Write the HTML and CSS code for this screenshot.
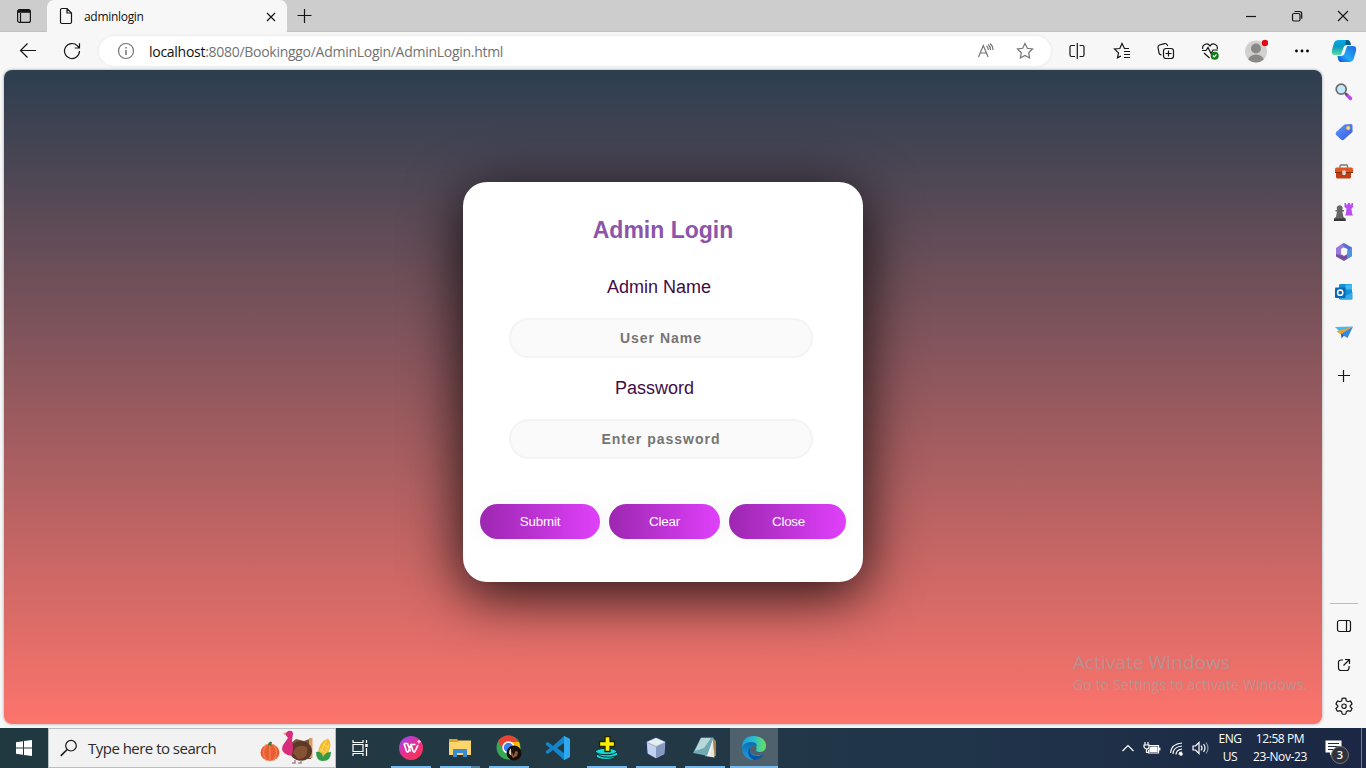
FILE: index.html
```html
<!DOCTYPE html>
<html lang="en">
<head>
<meta charset="utf-8">
<title>adminlogin</title>
<link rel="stylesheet" href="styles.css">
</head>
<body>
<header class="tabstrip">
  <div class="tab-actions"><svg width="16" height="16" viewBox="0 0 16 16" class="line"><rect x="1.6" y="1.600" width="12.800" height="12.800" rx="2"/><path d="M4.500 5v9" /><path d="M2 3.300h12" stroke-width="3"/></svg></div>
  <div class="tab">
    <svg width="14" height="18" viewBox="0 0 14 18" class="line"><path d="M1.500 3Q1.500 1.500 3 1.500H8L12.500 6V15Q12.500 16.500 11 16.500H3Q1.500 16.500 1.500 15ZM8 1.500V6H12.500"/></svg>
    <span class="tab-title">adminlogin</span>
    <svg class="line tab-close" width="10" height="10" viewBox="0 0 10 10"><path d="M1 1l8 8M9 1L1 9"/></svg>
  </div>
  <svg class="line new-tab" width="16" height="16" viewBox="0 0 16 16"><path d="M7.500 1v14M.5 7.500h14"/></svg>
  <div class="window-controls">
    <span><svg class="line" width="12" height="12" viewBox="0 0 12 12"><path d="M1 6.500h10"/></svg></span>
    <span><svg class="line" width="12" height="12" viewBox="0 0 12 12"><rect x="1.500" y="3.500" width="7.500" height="7.500" rx="1.500"/><path d="M3.500 1.500H8.500Q10.700 1.500 10.700 3.700V8.700"/></svg></span>
    <span><svg class="line" width="12" height="12" viewBox="0 0 12 12"><path d="M1 1l10 10M11 1L1 11"/></svg></span>
  </div>
</header>

<nav class="toolbar">
  <div class="nav-buttons">
    <span><svg class="line" width="18" height="18" viewBox="0 0 18 18"><path d="M17 8.500H2M8.500 1.500l-7 7 7 7"/></svg></span>
    <span><svg class="line" width="18" height="18" viewBox="0 0 18 18"><path d="M16.500 9A7.500 7.500 0 1 1 14.300 3.700L16.500 6M16.500 1.300V6H11.800"/></svg></span>
  </div>
  <div class="address">
    <svg class="line grey" width="18" height="18" viewBox="0 0 18 18"><circle cx="9" cy="9" r="7.500"/><path d="M9 8v5M9 5v1.500" stroke-width="1.500"/></svg>
    <div class="url"><b>localhost</b>:8080/Bookinggo/AdminLogin/AdminLogin.html</div>
    <svg class="line grey read" width="18" height="18" viewBox="0 0 18 18"><path d="M1.500 15L6.300 3.500 11.100 15M3 11h6.500M9.500 4Q11.200 5.500 11.300 8M11 2.500Q13.500 4.500 13.600 8M13 1.500Q16 4 16 8"/></svg>
    <svg class="line grey" width="18" height="18" viewBox="0 0 18 18"><path d="M9 1.500l2.300 4.800 5.200.7-3.800 3.700.9 5.300L9 13.500 4.400 16l.9-5.300L1.500 7l5.200-.7Z"/></svg>
  </div>
  <div class="tools">
    <span><svg class="line" width="18" height="18" viewBox="0 0 18 18"><path d="M7 3.500H3.500Q2 3.500 2 5V13Q2 14.500 3.500 14.500H7M11.500 3.500h3q1.500 0 1.500 1.500v8q0 1.500-1.500 1.500h-3M9.300 1v16"/></svg></span>
    <span><svg class="line" width="18" height="18" viewBox="0 0 18 18"><path d="M16 6.500H11.500L9 1.500 6.800 6.500 1.500 7l4 3.900-1 5L8 14M11 9.500h6M11 12.500h6M11 15.500h6"/></svg></span>
    <span><svg class="line" width="18" height="18" viewBox="0 0 18 18"><rect x="6.500" y="6.500" width="10" height="10" rx="2.500"/><path d="M11.500 8.500v6M8.500 11.500h6M4.500 13L3.500 12.600Q2.300 12.300 2 11L1 5.500Q.8 3.700 2.500 3L7.500 1.600Q9 1.200 10 2.500L10.700 4"/></svg></span>
    <span><svg class="line heart" width="18" height="18" viewBox="0 0 18 18"><path d="M1.700 7C1 2.500 6.500 0 9 4 11.500 0 17 2.500 16.300 7M1 8.500h4L7 5.500l3 6 2-3.500h5M3 11l5.500 5"/><circle cx="13.700" cy="13.700" r="4" fill="#107c10" stroke="none"/><path d="M12 13.500l1.300 1.300 2.200-2.500" stroke="#fff"/></svg></span>
    <span><svg width="24" height="24" viewBox="0 0 24 24"><defs><clipPath id="face"><circle cx="12" cy="12.500" r="11"/></clipPath></defs><g clip-path="url(#face)"><rect width="24" height="24" fill="#d2d0ce"/><circle cx="12" cy="9.500" r="5" fill="#8a8886"/><ellipse cx="12" cy="21.500" rx="8" ry="6" fill="#8a8886"/></g><circle cx="21" cy="4" r="3.200" fill="#e30613"/></svg></span>
    <span class="more"><svg width="16" height="4"><circle cx="2.500" cy="2" r="1.400"/><circle cx="8" cy="2" r="1.400"/><circle cx="13.500" cy="2" r="1.400"/></svg></span>
    <span class="copilot"><svg width="26" height="26" viewBox="0 0 26 26"><defs><linearGradient id="ca" x2="0" y2="1"><stop stop-color="#08a8e2"/><stop offset=".45" stop-color="#0e9ac4"/><stop offset="1" stop-color="#5bdc9b"/></linearGradient><linearGradient id="cb" x1="1" x2="0" y2="1"><stop stop-color="#2368dc"/><stop offset=".6" stop-color="#20a9f7"/><stop offset="1" stop-color="#1745db"/></linearGradient></defs><path d="M8 2H16Q19 2 20 7H16Q13 7 12 11L10 17H4Q0 17 1 12L3 5Q4 2 8 2Z" fill="url(#ca)"/><path d="M15 2h1q3 0 4 5h-6z" fill="#095c86"/><path d="M18 24H10Q7 24 6.500 18H10Q13 18 14 14L16 8H22Q26 8 25 13L23 20Q22 24 18 24Z" fill="url(#cb)"/></svg></span>
  </div>
</nav>

<div class="workspace">
  <main class="page">
    <form class="card">
      <h1>Admin Login</h1>
      <label class="name-label">Admin Name</label>
      <input type="text" placeholder="User Name">
      <label class="pass-label">Password</label>
      <input type="password" placeholder="Enter password">
      <div class="buttons">
        <button type="button" class="submit">Submit</button><button type="button" class="clear">Clear</button><button type="button" class="close">Close</button>
      </div>
    </form>
    <div class="watermark"><div class="wm-big">Activate Windows</div><div class="wm-small">Go to Settings to activate Windows.</div></div>
  </main>
  <aside class="sidebar">
    <svg width="18" height="18" viewBox="0 0 18 18"><path d="M11.500 11.500l4 4" stroke="#b749f2" stroke-width="3.400" stroke-linecap="round"/><path d="M10 10l2 2" stroke="#555" stroke-width="2"/><circle cx="6.200" cy="6.200" r="5" fill="#c5e7fc" stroke="#6b6b6b" stroke-width="1.700"/></svg>
    <svg width="18" height="18" viewBox="0 0 18 18"><defs><linearGradient id="tg" y2="1"><stop stop-color="#53a0ff"/><stop offset="1" stop-color="#4253df"/></linearGradient></defs><path d="M9.500 1.500L16 1Q17.500 1 17.500 2.500V9L9 16.500Q7.500 17.800 6 16.500L1.200 12Q0 10.500 1.200 9Z" fill="url(#tg)"/><circle cx="13.200" cy="5" r="1.500" fill="#fff" stroke="#f6bd32" stroke-width="1.300"/></svg>
    <svg width="20" height="18" viewBox="0 0 20 18"><path d="M6 5V3.300q0-1.300 1-1.300h5.500q1 0 1 1.300V5" fill="none" stroke="#777" stroke-width="1.300"/><path d="M2 8h15v6q0 1.500-1.500 1.500h-12Q2 15.500 2 14Z" fill="#bd3f12"/><path d="M1 6q0-1.500 1.500-1.500h15q1.500 0 1.500 1.500v3.500H1Z" fill="#df571e"/><path d="M1 9.500h18" stroke="#8b2b10"/><rect x="8.300" y="7.500" width="3.400" height="4.500" rx="1" fill="#ddd"/></svg>
    <svg class="games" width="20" height="20" viewBox="0 0 20 20"><path d="M10.500 1H12v1.500h2V1h2v1.500h1.500V1H19v4l-1.500 1.500.5 5 1 2h-8l1-2 .5-5L10.500 5Z" fill="#bc4cf4"/><path d="M3.200 8a3 3 0 1 1 5 0H10v1.500H8.300L9.500 15l2 1.500V19H0v-2.500L2 15l1-5.500H1.500V8Z" fill="#666"/><path d="M0 16.500h11.500V19H0Z" fill="#383838"/></svg>
    <svg width="18" height="18" viewBox="0 0 18 18"><path d="M6 1.500L9 0l8 4.500v6L12.500 8V6L9 4.500Z" fill="#5271d6"/><path d="M1 5L6 1.500 10 3.500 6 6v5l3 2-4 2.500L1 13Z" fill="#9a7bdb"/><path d="M1 11l4 1 4 1 3.500-2V8L17 10.500V13L9 18 1 13.500Z" fill="#75509f"/><path d="M12.500 8L17 5v8l-5 3v-4.500Z" fill="#4d94e0"/></svg>
    <svg width="18" height="18" viewBox="0 0 18 18"><rect x="4" y="1" width="13" height="15.500" rx="1" fill="#168ed8"/><path d="M10.500 1.500H17v5h-6.500Z" fill="#39bdf3"/><path d="M5 9l6.500 3.500 6-3.500v7.500H5Z" fill="#36a9e6"/><rect y="4.500" width="10.500" height="10.500" rx="1" fill="#0967b7"/><circle cx="5.200" cy="9.700" r="2.600" fill="none" stroke="#fff" stroke-width="1.500"/></svg>
    <svg width="18" height="18" viewBox="0 0 18 18"><path d="M0 4L18 3.500 6 10Z" fill="#45b9f0"/><path d="M1.500 8.500L18 3.500 6 11.500Z" fill="#f2a31d"/><path d="M6 11L18 3.500 12.500 15Z" fill="#3288e4"/><path d="M6 10.500l3 2-2.500 3Z" fill="#1c5cb4"/></svg>
    <svg class="line side-plus" width="12" height="12" viewBox="0 0 12 12"><path d="M5.500 0v12M0 5.500h12"/></svg>
    <div class="side-bottom">
      <svg class="line" width="16" height="14" viewBox="0 0 16 14"><rect x="1.500" y="1.500" width="13" height="11" rx="2"/><path d="M10.500 1.500v11"/></svg>
      <svg class="line" width="14" height="14" viewBox="0 0 14 14"><path d="M6 2H4Q1.500 2 1.500 4.500V10Q1.500 12.500 4 12.500H9.500Q12 12.500 12 10V8M8 1.500h4.500V6M12.500 1.500L6.500 7.500"/></svg>
      <svg class="line" width="18" height="18" viewBox="0 0 18 18"><path d="M7.200 1.300Q9 .8 10.800 1.300L11.300 3.800 13 4.700 15.300 4Q16.600 5.300 17 7L15.200 8.800V9.800L17 11.500Q16.500 13.200 15.300 14.400L13 13.700 11.300 14.600 10.800 17Q9 17.500 7.200 17L6.700 14.600 5 13.700 2.700 14.400Q1.500 13.200 1 11.500L2.800 9.800V8.800L1 7Q1.400 5.300 2.700 4L5 4.700 6.700 3.800Z"/><circle cx="9" cy="9.200" r="2.200"/></svg>
    </div>
  </aside>
</div>

<footer class="taskbar">
  <div class="start"><svg width="16" height="16" viewBox="0 0 16 16" fill="#fff"><path d="M0 2.300L7 1.200V7.500H0ZM8 1L16 0V7.500H8ZM0 8.500H7V14.800L0 13.700ZM8 8.500H16V16L8 15Z"/></svg></div>
  <div class="search">
    <svg class="line" width="18" height="18" viewBox="0 0 18 18"><circle cx="11" cy="6.700" r="5.300"/><path d="M7.200 10.500L.8 16.900" stroke-width="1.500"/></svg>
    <span class="search-text">Type here to search</span>
    <svg width="74" height="36" viewBox="0 0 74 36"><ellipse cx="12" cy="22.500" rx="9.500" ry="8.500" fill="#e95d34"/><path d="M8.500 14.500q-6 8 0 16M15.500 14.500q6 8 0 16M12 14v17" fill="none" stroke="#f58250" stroke-width="1.300"/><path d="M10 15q0-3 3-3.500l1 1-1 3.500Z" fill="#47772d"/>
      <path d="M32 14L38 9 46 11 53 8.500 53 29H42Z" fill="#795335"/><path d="M51 8h3.500v20H51Z" fill="#dc9a68"/><ellipse cx="43" cy="21" rx="11" ry="10" fill="#5b3828"/><path d="M35 23Q38 13 49 17 51 29 40 29Z" fill="#855236"/><path d="M30 1q5-1.500 5 3l-1 6 1 8-1 8Q21 24 25 15L30 8l-3-4Z" fill="#d92c7c"/><path d="M27.500 2L25 4l3 1Z" fill="#ec9b41"/><path d="M37 30v3h-3M43 30v3h-3" fill="none" stroke="#aa8790" stroke-width="1.500"/>
      <path d="M60 28Q59 12 70 8.500 75 13 70 23L65 31Z" fill="#f4bb31"/><path d="M62 24l6-13M66 26l5-12M62 19l6 4M65 14l6 4" stroke="#ffdb65"/><path d="M58 22Q64 21 65 27 67 22 73 22 73 31 65 31 58 31 58 22Z" fill="#36994a"/></svg>
  </div>
  <div class="taskview"><svg width="18" height="18" viewBox="0 0 18 18" fill="none" stroke="#fff" stroke-width="1.200"><path d="M2 1v2.500h10V1M2 17v-2.500h10V17M2 5.500h10v7H2ZM15.500 1v3M15.500 9v8"/><path d="M15.500 5v3" stroke-width="2.500"/></svg></div>
  <div class="apps">
    <span class="app on"><svg width="24" height="24" viewBox="0 0 24 24"><defs><linearGradient id="wp" x2=".8" y2="1"><stop stop-color="#8d4cff"/><stop offset=".5" stop-color="#e52f96"/><stop offset="1" stop-color="#fb334c"/></linearGradient></defs><circle cx="12" cy="12" r="12" fill="url(#wp)"/><path d="M5 7.500H8.500L11.500 15.500M5 7.500L7.500 15Q8.500 17.500 9.700 15L12 8.500 14 15Q15.200 17.500 16.200 15L19 9M12 8.500h4.500" fill="none" stroke="#fff" stroke-width="1.700" stroke-linejoin="round"/><path d="M20 4v3.500M18.200 5.700h3.600" stroke="#fff"/></svg></span>
    <span class="app on folder"><svg width="24" height="24" viewBox="0 0 24 24"><path d="M1 3h8l2 2v6H1Z" fill="#e4a225"/><path d="M1 6h9l1-1.500h12V19H1Z" fill="#fbd46c"/><path d="M5 21v-7q0-1 1-1h12q1 0 1 1v7h-4v-4H9v4Z" fill="#3a8bd0"/></svg></span>
    <span class="app on"><svg width="26" height="26" viewBox="0 0 26 26"><circle cx="12.500" cy="12.500" r="12" fill="#34a853"/><path d="M2 6Q6 .5 12.500.5T23 7H12.500L7.500 15.500Z" fill="#ea4335"/><path d="M12.500 7H23Q27 18 18 23L12.500 24.500 17 15Z" fill="#fbbc04"/><circle cx="12.500" cy="12.500" r="5.500" fill="#3c7ff0" stroke="#fff" stroke-width="1.500"/><circle cx="18" cy="18" r="7.500" fill="#150e0c"/><path d="M13 18.500q0-4 2-5v7Z" fill="#ddd0c6"/><path d="M16 14q5-2 6 3l-1 4-4 2-2-3Z" fill="#8d5b40"/><path d="M15.500 16q1-4 5-3l2 4-3-1-2 5Z" fill="#20120d"/></svg></span>
    <span class="app"><svg width="24" height="24" viewBox="0 0 24 24"><path d="M18 0L24 3V21L18 24 7 14 2 18 0 17V15L4 12 0 9V7L2 6 7 10ZM18 7L11 12 18 17Z" fill="#1585ca" fill-rule="evenodd"/><path d="M18 0l6 3v18l-6 3Z" fill="#2fa8ed"/></svg></span>
    <span class="app on"><svg width="24" height="24" viewBox="0 0 24 24"><ellipse cx="11" cy="20" rx="10" ry="3.500" fill="#16dada" stroke="#062d32"/><ellipse cx="13" cy="18" rx="10" ry="3.200" fill="#16dada" stroke="#062d32"/><ellipse cx="11" cy="15.500" rx="10.500" ry="3.200" fill="#16dada" stroke="#062d32"/><path d="M10 .5h5v5h4.500v5H15v5h-5v-5H4.500v-5H10Z" fill="#fff000" stroke="#222400" stroke-width="1.300"/></svg></span>
    <span class="app on"><svg width="24" height="24" viewBox="0 0 24 24"><path d="M2 5.500L12 1l10 4.500-1 13L12 23 3 18Z" fill="#9bb0ce" stroke="#29345c" stroke-width="1.300"/><path d="M3 6l9-4 9 4-9 4Z" fill="#e3eeee"/><path d="M3 7l9 4v11l-8-4.500Z" fill="#c3d3ef"/><path d="M12 11l9-4-1 10.500L12 22Z" fill="#8499bd"/></svg></span>
    <span class="app on"><svg width="26" height="24" viewBox="0 0 26 24"><path d="M21 2l3 3v15h-2Z" fill="#a88148"/><path d="M21 3l1.500 18.500L13 20Z" fill="#e5e7df"/><path d="M9 1.500h12.500L16 20 1 17Z" fill="#6faab4"/><path d="M9 2h10L12 12 3 15Z" fill="#b6d8d9"/><path d="M21.500 2L18 20h-3Z" fill="#f1f3ed"/><path d="M9 1h13" stroke="#384b53" stroke-dasharray="1 1"/></svg></span>
    <span class="app on active"><svg width="24" height="24" viewBox="0 0 24 24"><defs><linearGradient id="ea" x2="1"><stop stop-color="#169fe0"/><stop offset=".5" stop-color="#2dbed2"/><stop offset="1" stop-color="#69e353"/></linearGradient><linearGradient id="eb" x2="0" y2="1"><stop stop-color="#0b6fae"/><stop offset="1" stop-color="#229ee6"/></linearGradient></defs><path d="M0 12Q0 0 12 0 23 1 24 9 24 16 18 16 13 16 14.500 13 15 8 9 7 2 7 0 12Z" fill="url(#ea)"/><path d="M0 12Q2 6 9 6 15 6 15 10 9 8 8 13 8 22 22 18 17 24 11 24 0 22 0 12Z" fill="url(#eb)"/><path d="M8 11Q6 21 17 20L22 18Q18 24 12 24 3 20 8 11Z" fill="#0a559b"/></svg></span>
  </div>
  <div class="tray">
    <svg width="14" height="14" viewBox="0 0 14 14"><path d="M1.500 10L7 4.500l5.500 5.500"/></svg>
    <svg width="18" height="16" viewBox="0 0 18 16"><path d="M6 5.500h9.500v7.500H5.500V10M16.800 7.500v3"/><path d="M8 7h6v4.500H7V9Z" fill="#fff"/><path d="M2 2v3M5 2v3M1 5h5v2q0 2-2 2T1 7ZM3.500 9v3.500h2"/></svg>
    <svg width="15" height="16" viewBox="0 0 15 16"><path d="M1.500 13Q2 4 13 3M4 14Q4 7 13 6M7 14.500Q7 10 13 9M10 14.500Q10 12 13 12" stroke-width="1.100"/><circle cx="12" cy="14" r="1.200" fill="#fff"/></svg>
    <svg width="18" height="16" viewBox="0 0 18 16"><path d="M1 6h2.500L7 2.500v11L3.500 10H1ZM9 5.500q2 2.500 0 5M11.500 4q3 4 0 8"/><path d="M14 2.500q4 5.500 0 11" stroke="#8594a5"/></svg>
    <div class="lang"><span>ENG</span><span>US</span></div>
    <div class="clock"><span class="time">12:58 PM</span><span class="date">23-Nov-23</span></div>
    <div class="notice"><svg width="18" height="16" viewBox="0 0 18 16"><path d="M.5.5h16v12H8l-3 3v-3H.5Z" fill="#fff" stroke="none"/><path d="M3 3.500h11M3 6.500h11M3 9.500h6" stroke="#1b2a44"/></svg><b>3</b></div>
  </div>
</footer>
</body>
</html>
```

FILE: styles.css
```css
* { box-sizing: border-box; }
html, body { height: 100%; }
body {
  margin: 0;
  width: 1366px;
  height: 768px;
  overflow: hidden;
  display: grid;
  grid-template-rows: 32px 38px 658px 40px;
  background: #f7f7f7;
  font-family: "Open Sans", "Noto Sans", sans-serif;
  color: #111;
}
svg { display: block; flex: none; }
.line { fill: none; stroke: #161616; stroke-width: 1.2; }
.grey { stroke: #737373; }

.tabstrip { display: flex; align-items: center; background: #cdcdcd; border-bottom: 1px solid #c1c1c1; }
.tab-actions { width: 47px; padding-left: 16px; }
.tab {
  width: 240px; height: 32px; align-self: flex-start;
  display: flex; align-items: center; padding: 0 11px 0 12px;
  background: #f7f7f7; border-radius: 7px 7px 0 0;
}
.tab-title { flex: 1; padding-left: 11px; font-size: 12px; letter-spacing: -0.3px; }
.tab-close { margin-top: 1px; }
.new-tab { margin-left: 10px; }
.window-controls { margin-left: auto; display: flex; }
.window-controls span { width: 46px; display: flex; justify-content: center; }

.toolbar { display: flex; align-items: center; }
.nav-buttons { width: 99px; padding-left: 6px; display: flex; }
.nav-buttons span { width: 44px; display: flex; justify-content: center; }
.address {
  width: 952px; height: 30px; padding: 0 17px 0 18px;
  display: flex; align-items: center;
  background: #fff; border-radius: 15px; box-shadow: 0 0 3px #e2e2e2;
}
.url { flex: 1; padding-left: 14px; font-size: 14px; letter-spacing: -0.28px; color: #727272; }
.url b { font-weight: 400; color: #111; }
.read { margin-right: 21px; }
.tools { display: flex; align-items: center; padding-left: 4px; }
.tools span { width: 44.6px; display: flex; justify-content: center; }
.tools .more { padding-left: 4px; }
.tools .copilot { width: 42px; }
.heart { margin-right: 2px; }

.workspace { display: grid; grid-template-columns: 1318px 1fr; padding-left: 4px; }
.page {
  position: relative; height: 654px;
  border-radius: 8px; overflow: hidden;
  background: linear-gradient(#2c3e50, #fd746c);
  box-shadow: 0 0 3px #999;
  font-family: "Liberation Sans", Arial, sans-serif;
}
.card {
  width: 400px; height: 400px; margin: 112px auto 0; padding-top: 36px;
  display: flex; flex-direction: column; align-items: center;
  border-radius: 24px; background: #fff;
  box-shadow: 0 12px 55px 2px rgba(0, 0, 0, 0.8);
}
.card h1 { margin: 0; font-size: 23px; line-height: 24px; color: #8c55aa; }
.card label { font-size: 18px; line-height: 20px; color: #400c47; }
.card .name-label { margin: 35px 8px 21px 0; }
.card .pass-label { margin: 20px 17px 21px 0; }
.card input {
  width: 304px; height: 40px; margin: 0 4px 0 0; padding: 0 20px;
  border: 2px solid #f4f4f4; border-radius: 20px; background: #fafafa;
  font: 700 14px "Liberation Sans", Arial, sans-serif;
  letter-spacing: 1px; text-align: center;
}
.card input::placeholder { color: #757575; }
.buttons { display: flex; gap: 9px; margin-top: 45px; }
.buttons button {
  height: 35px; padding: 0; border: 0; border-radius: 18px;
  font: 13.333px "Liberation Sans", Arial, sans-serif; letter-spacing: -0.2px; color: #fff;
  background: linear-gradient(to right, #9c27b0, #e040fb);
  box-shadow: 0 0 20px 1px rgba(0, 0, 0, 0.04);
}
.buttons .submit { width: 120px; }
.buttons .clear { width: 111px; }
.buttons .close { width: 117px; padding-left: 2px; }
.watermark {
  position: absolute; right: 14px; bottom: 29px; width: 235px;
  font-family: "Open Sans", sans-serif; color: rgba(151, 166, 166, 0.65); white-space: nowrap;
}
.wm-big { font-size: 19px; line-height: 26px; letter-spacing: 0.07px; }
.wm-small { font-size: 14px; line-height: 20px; letter-spacing: 0.15px; }

.sidebar { display: flex; flex-direction: column; align-items: center; gap: 22px; padding-top: 13px; }
.games { margin: -1px 0; }
.side-plus { margin-top: 7px; }
.side-bottom {
  width: 28px; margin-top: auto; margin-bottom: 13px; padding-top: 15px;
  display: flex; flex-direction: column; align-items: center; gap: 25px;
  border-top: 1px solid #bcbcbc;
}

.taskbar { display: flex; background: linear-gradient(to right, #203840, #233944 45%, #20344a 70%, #1b2744); }
.start { width: 48px; display: flex; align-items: center; justify-content: center; }
.search {
  width: 288px; height: 40px; padding: 0 3px 0 11px;
  display: flex; align-items: center;
  background: #f2f2f2; border: 1px solid #b9c0c1;
}
.search-text { flex: 1; padding-left: 10px; font-size: 15px; letter-spacing: -0.52px; white-space: nowrap; color: #2b2b2b; }
.taskview { width: 51px; padding-left: 15px; display: flex; align-items: center; }
.apps { display: flex; gap: 1px; }
.app { width: 48px; display: flex; align-items: center; justify-content: center; }
.app.on { background: linear-gradient(#76b9ed, #76b9ed) center bottom / 40px 2px no-repeat; }
.app.folder { background: linear-gradient(to right, #76b9ed 31px, #557f9e 31px) center bottom / 40px 2px no-repeat; }
.app.active { background: linear-gradient(#76b9ed, #76b9ed) center bottom / 48px 2px no-repeat, #4f616c; }

.tray { margin-left: auto; display: flex; align-items: center; color: #fff; font-size: 12px; border-right: 1px solid #707b8b; margin-right: 4px; }
.tray svg { fill: none; stroke: #fff; stroke-width: 1.2; margin-right: 8px; }
.lang, .clock { display: flex; flex-direction: column; align-items: center; line-height: 18px; letter-spacing: -0.4px; }
.lang { width: 26px; margin-left: -1px; }
.clock { width: 74px; white-space: nowrap; }
.notice { position: relative; width: 44px; padding-left: 8px; }
.notice b {
  position: absolute; left: 14px; top: 6px; width: 18px; height: 18px;
  border: 1px solid #777; border-radius: 50%; background: #303239;
  font-size: 11px; line-height: 15px; text-align: center; font-weight: 600;
}
```
